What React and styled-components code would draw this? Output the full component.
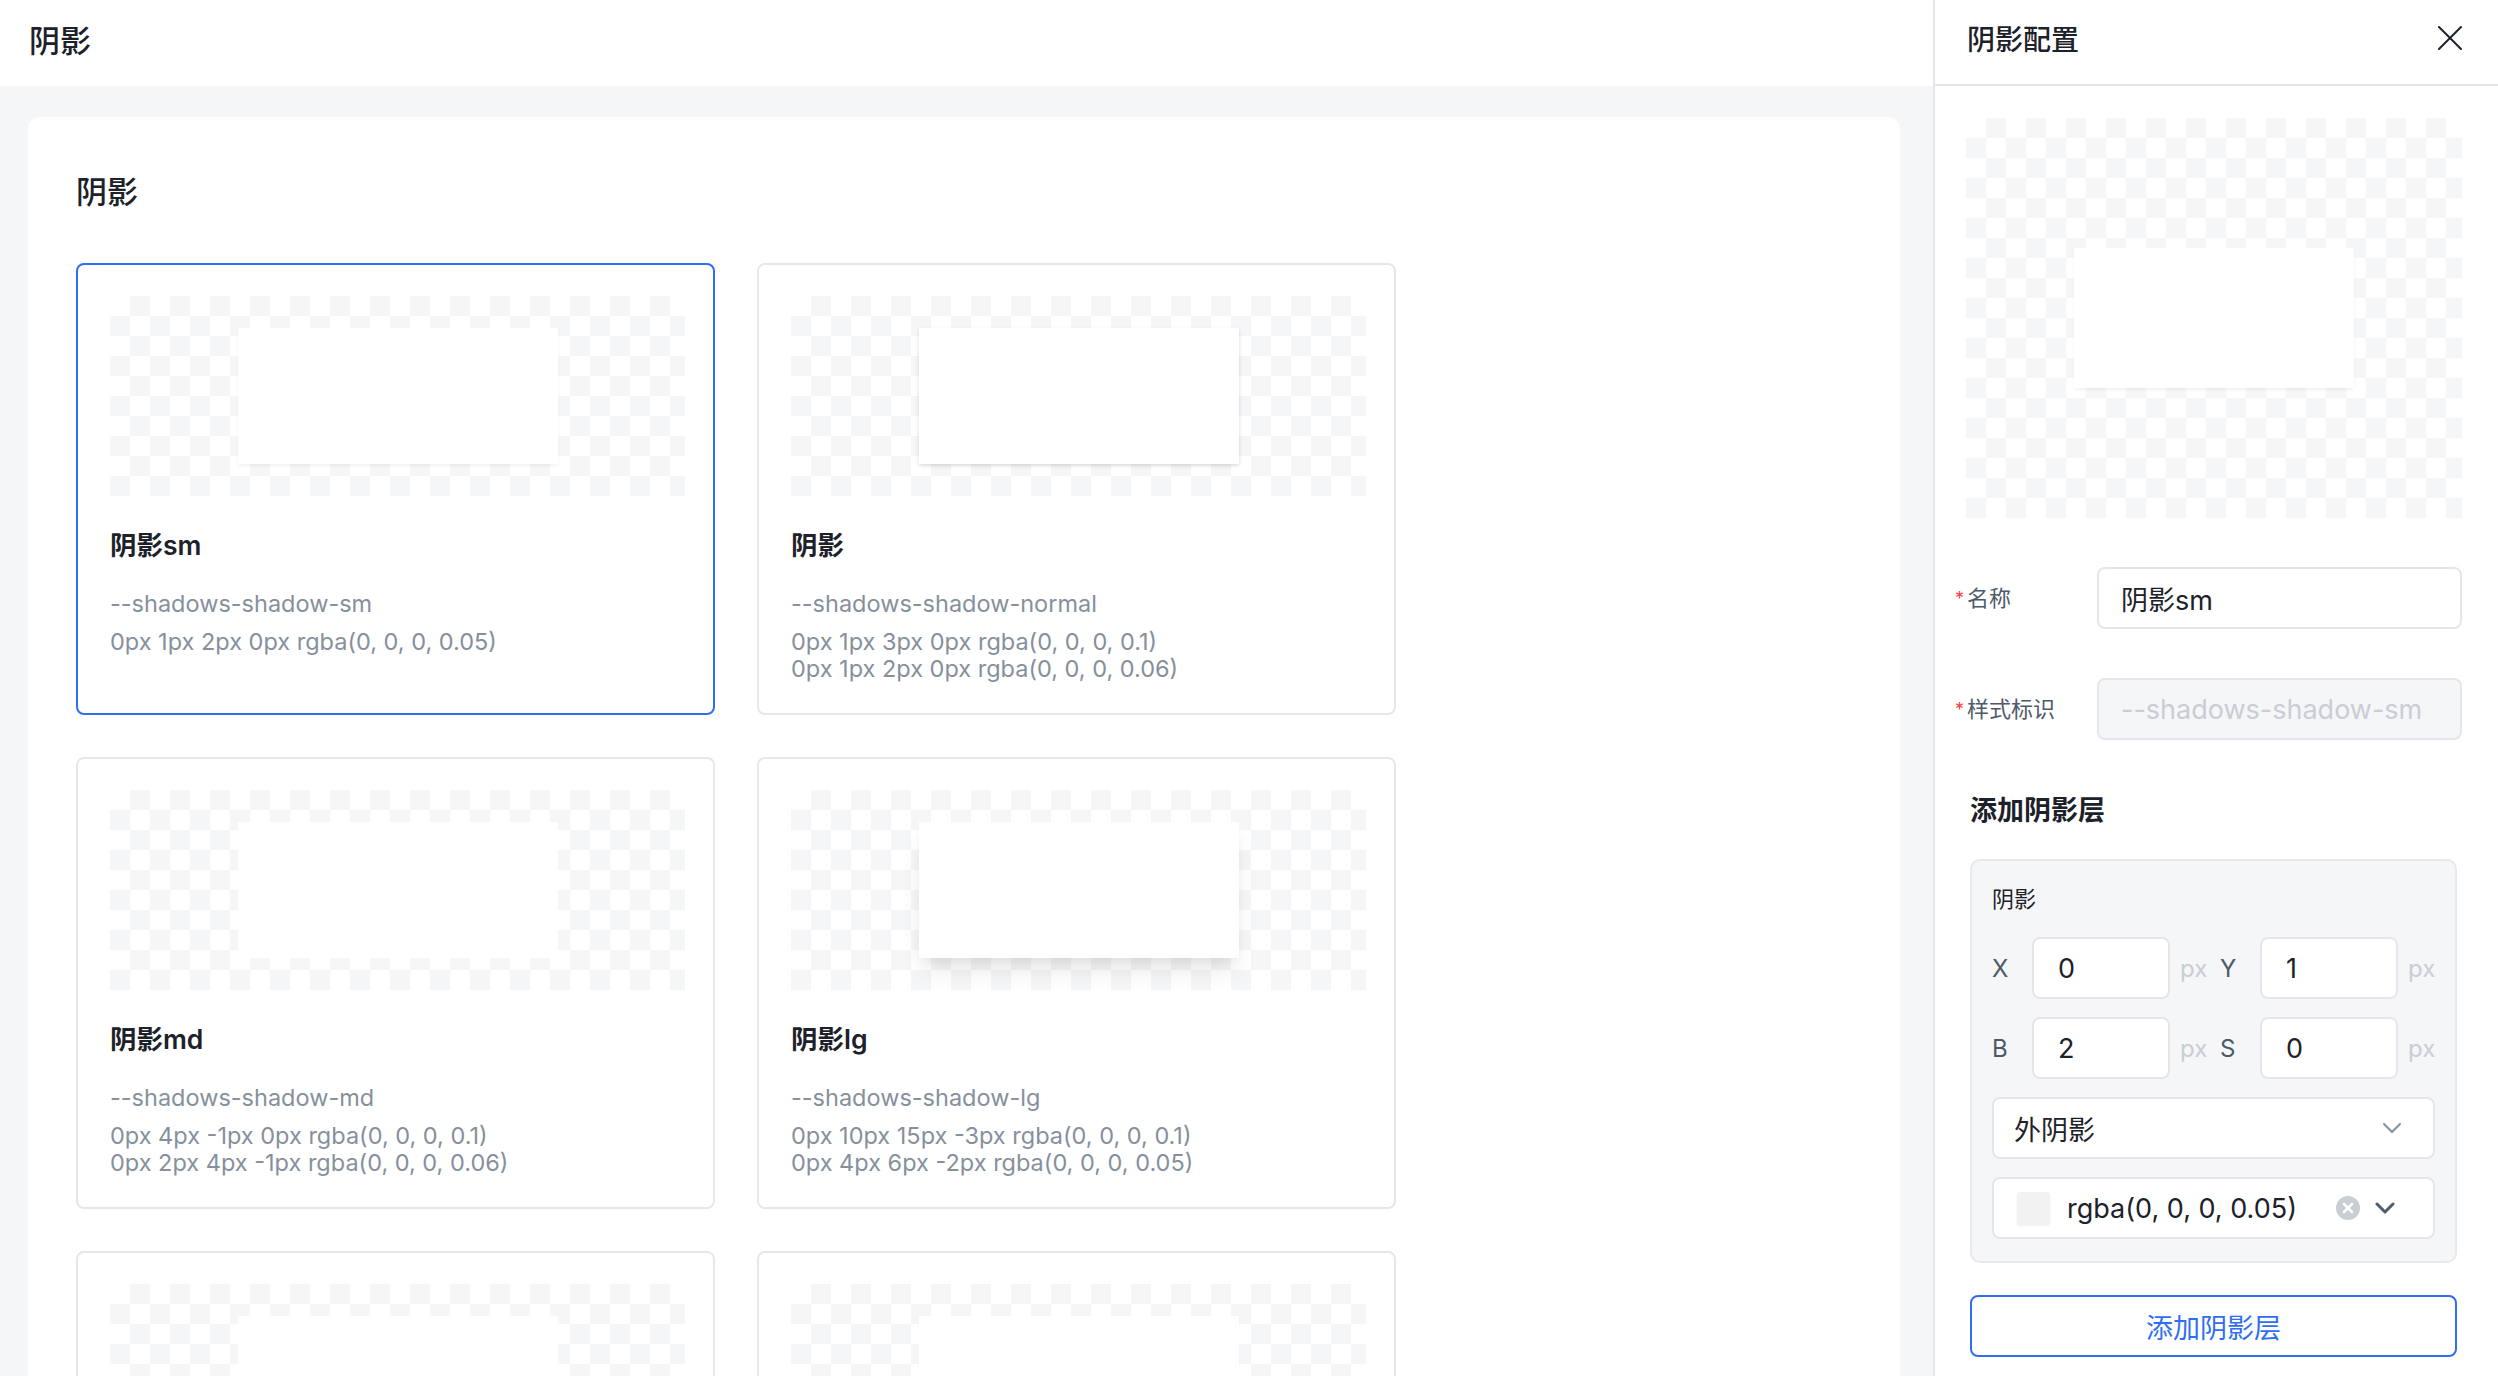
import React from 'react'
import styled, { createGlobalStyle } from 'styled-components'

const GlobalStyle = createGlobalStyle`
  html, body {
    margin: 0;
    height: 100%;
    overflow: hidden;
  }
  body {
    font-family: Inter, "Noto Sans CJK SC", sans-serif;
    color: #1d2129;
    background: #fff;
  }
  * {
    box-sizing: border-box;
  }
`

const shadows = [
  {
    name: '阴影sm',
    token: '--shadows-shadow-sm',
    values: ['0px 1px 2px 0px rgba(0, 0, 0, 0.05)'],
    preview: '0 1.6px 3.2px 0 rgba(0, 0, 0, 0.05)',
    active: true,
  },
  {
    name: '阴影',
    token: '--shadows-shadow-normal',
    values: ['0px 1px 3px 0px rgba(0, 0, 0, 0.1)', '0px 1px 2px 0px rgba(0, 0, 0, 0.06)'],
    preview: '0 1.6px 4.8px 0 rgba(0, 0, 0, 0.1), 0 1.6px 3.2px 0 rgba(0, 0, 0, 0.06)',
  },
  {
    name: '阴影md',
    token: '--shadows-shadow-md',
    values: ['0px 4px -1px 0px rgba(0, 0, 0, 0.1)', '0px 2px 4px -1px rgba(0, 0, 0, 0.06)'],
    preview: 'none',
  },
  {
    name: '阴影lg',
    token: '--shadows-shadow-lg',
    values: ['0px 10px 15px -3px rgba(0, 0, 0, 0.1)', '0px 4px 6px -2px rgba(0, 0, 0, 0.05)'],
    preview: '0 16px 24px -4.8px rgba(0, 0, 0, 0.1), 0 6.4px 9.6px -3.2px rgba(0, 0, 0, 0.05)',
  },
  {
    name: '阴影xl',
    token: '--shadows-shadow-xl',
    values: ['0px 20px -5px 0px rgba(0, 0, 0, 0.1)', '0px 10px 10px -5px rgba(0, 0, 0, 0.04)'],
    preview: 'none',
  },
  {
    name: '阴影2xl',
    token: '--shadows-shadow-2xl',
    values: ['0px 25px 50px -12px rgba(0, 0, 0, 0.25)'],
    preview: '0 1px 2px 0 rgba(0, 0, 0, 0.03)',
  },
]

function CloseIcon() {
  return (
    <svg width="24" height="24" viewBox="0 0 24 24" fill="none" stroke="#1d2129" strokeWidth="2" strokeLinecap="round">
      <line x1="1" y1="1" x2="23" y2="23" />
      <line x1="23" y1="1" x2="1" y2="23" />
    </svg>
  )
}

function Chevron({ bold }) {
  return (
    <svg width="20" height="12" viewBox="0 0 20 12" fill="none" stroke={bold ? '#4e5969' : '#86909c'} strokeWidth={bold ? 3 : 2} strokeLinecap="round" strokeLinejoin="round">
      <polyline points="2,2 10,10 18,2" />
    </svg>
  )
}

function ClearIcon() {
  return (
    <svg width="26" height="26" viewBox="0 0 26 26">
      <circle cx="13" cy="13" r="12" fill="#c9cdd4" />
      <g stroke="#fff" strokeWidth="2.6" strokeLinecap="round">
        <line x1="9" y1="9" x2="17" y2="17" />
        <line x1="17" y1="9" x2="9" y2="17" />
      </g>
    </svg>
  )
}

function ShadowCard({ item }) {
  return (
    <Card $active={item.active}>
      <Checker $height={200}>
        <PreviewBox $w={320} $h={136} $shadow={item.preview} />
      </Checker>
      <CardTitle>{item.name}</CardTitle>
      <Token>{item.token}</Token>
      <Values>
        {item.values.map((v) => (
          <div key={v}>{v}</div>
        ))}
      </Values>
    </Card>
  )
}

export default function App() {
  return (
    <>
      <GlobalStyle />
      <Page>
        <Main>
          <TopBar>
            <PageTitle>阴影</PageTitle>
          </TopBar>
          <Content>
            <Panel>
              <PanelTitle>阴影</PanelTitle>
              <CardGrid>
                {shadows.map((s) => (
                  <ShadowCard key={s.token} item={s} />
                ))}
              </CardGrid>
            </Panel>
          </Content>
        </Main>

        <Side>
          <SideHeader>
            <SideTitle>阴影配置</SideTitle>
            <CloseButton>
              <CloseIcon />
            </CloseButton>
          </SideHeader>
          <SideBody>
            <Checker $height={400}>
              <PreviewBox $w={280} $h={140} $shadow="0 1.6px 3.2px 0 rgba(0, 0, 0, 0.05)" />
            </Checker>

            <FieldRow>
              <FieldLabel><Required>*</Required>名称</FieldLabel>
              <TextInput value="阴影sm" readOnly />
            </FieldRow>
            <FieldRow>
              <FieldLabel><Required>*</Required>样式标识</FieldLabel>
              <TextInput value="--shadows-shadow-sm" readOnly $disabled />
            </FieldRow>

            <LayerSection>
              <LayerHeading>添加阴影层</LayerHeading>
              <LayerBox>
                <LayerName>阴影</LayerName>
                <ParamGrid>
                  <ParamLabel>X</ParamLabel>
                  <NumberInput value="0" readOnly />
                  <Unit>px</Unit>
                  <ParamLabel>Y</ParamLabel>
                  <NumberInput value="1" readOnly />
                  <Unit>px</Unit>
                  <ParamLabel>B</ParamLabel>
                  <NumberInput value="2" readOnly />
                  <Unit>px</Unit>
                  <ParamLabel>S</ParamLabel>
                  <NumberInput value="0" readOnly />
                  <Unit>px</Unit>
                </ParamGrid>
                <SelectBox>
                  <span>外阴影</span>
                  <Chevron />
                </SelectBox>
                <ColorField>
                  <Swatch />
                  <ColorText>rgba(0, 0, 0, 0.05)</ColorText>
                  <ClearIcon />
                  <Chevron bold />
                </ColorField>
              </LayerBox>
              <AddButton>添加阴影层</AddButton>
            </LayerSection>
          </SideBody>
        </Side>
      </Page>
    </>
  )
}

const Page = styled.div`
  display: flex;
  width: 100%;
  height: 100vh;
  overflow: hidden;
`

const Main = styled.div`
  flex: 1;
  min-width: 0;
  display: flex;
  flex-direction: column;
`

const TopBar = styled.div`
  height: 86px;
  flex-shrink: 0;
  display: flex;
  align-items: center;
  padding: 0 29px 5px;
  background: #fff;
`

const PageTitle = styled.h1`
  margin: 0;
  font-size: 31px;
  line-height: 42px;
  font-weight: 500;
  color: #1d2129;
`

const Content = styled.div`
  flex: 1;
  min-height: 0;
  overflow: hidden;
  background: #f5f6f8;
  padding: 31px 33px 0 28px;
`

const Panel = styled.div`
  background: #fff;
  border-radius: 12px;
  padding: 54px 48px 48px;
`

const PanelTitle = styled.h2`
  margin: 0 0 50px;
  font-size: 31px;
  line-height: 42px;
  font-weight: 500;
  color: #1d2129;
`

const CardGrid = styled.div`
  display: grid;
  grid-template-columns: repeat(2, 639px);
  gap: 42px;
`

const Card = styled.div`
  border: 2px solid ${(p) => (p.$active ? '#2f6ef2' : '#e6e7eb')};
  border-radius: 8px;
  padding: 31px 28px 31px 32px;
  background: #fff;
`

const Checker = styled.div`
  height: ${(p) => p.$height}px;
  display: flex;
  align-items: center;
  justify-content: center;
  background: repeating-conic-gradient(#f5f6f8 0 25%, #fff 0 50%) 0 0 / 40px 40px;
`

const PreviewBox = styled.div`
  width: ${(p) => p.$w}px;
  height: ${(p) => p.$h}px;
  background: #fff;
  box-shadow: ${(p) => p.$shadow};
`

const CardTitle = styled.div`
  margin-top: 31px;
  font-size: 26.5px;
  line-height: 36px;
  font-weight: 600;
  color: #1d2129;
`

const Token = styled.div`
  margin-top: 27px;
  font-size: 23.5px;
  line-height: 28px;
  color: #86909c;
`

const Values = styled.div`
  margin-top: 10px;
  font-size: 23.5px;
  line-height: 27px;
  color: #86909c;
`

const Side = styled.aside`
  width: 565px;
  flex-shrink: 0;
  border-left: 2px solid #e5e6eb;
  background: #fff;
  display: flex;
  flex-direction: column;
`

const SideHeader = styled.div`
  height: 86px;
  flex-shrink: 0;
  display: flex;
  align-items: center;
  justify-content: space-between;
  padding: 0 36px 4px 32px;
  border-bottom: 2px solid #e5e6eb;
`

const SideTitle = styled.h3`
  margin: 0;
  font-size: 28px;
  line-height: 40px;
  font-weight: 500;
  color: #1d2129;
`

const CloseButton = styled.button`
  display: flex;
  padding: 0;
  margin-bottom: 4px;
  border: none;
  background: none;
  cursor: pointer;
`

const SideBody = styled.div`
  padding: 32px 36px 0 31px;
`

const FieldRow = styled.div`
  display: grid;
  grid-template-columns: 131px 1fr;
  align-items: center;
  margin-top: 49px;
`

const FieldLabel = styled.label`
  margin-left: -11px;
  font-size: 22px;
  line-height: 30px;
  color: #4e5969;
`

const Required = styled.span`
  display: inline-block;
  width: 12px;
  font-size: 18px;
  color: #f53f3f;
  vertical-align: 1px;
`

const TextInput = styled.input`
  width: 100%;
  height: 62px;
  border: 2px solid #e5e6eb;
  border-radius: 8px;
  padding: 0 22px;
  font: inherit;
  font-size: 27px;
  outline: none;
  color: ${(p) => (p.$disabled ? '#c9cdd4' : '#1d2129')};
  background: ${(p) => (p.$disabled ? '#f5f6f8' : '#fff')};
`

const LayerSection = styled.div`
  margin: 0 5px 0 4px;
`

const LayerHeading = styled.h4`
  margin: 51px 0 28px;
  font-size: 27px;
  line-height: 40px;
  font-weight: 600;
  color: #1d2129;
`

const LayerBox = styled.div`
  background: #f5f6f8;
  border: 2px solid #e8e9ec;
  border-radius: 10px;
  padding: 22px 20px 22px 20px;
`

const LayerName = styled.div`
  font-size: 22px;
  line-height: 32px;
  margin-bottom: 22px;
  color: #1d2129;
`

const ParamGrid = styled.div`
  display: grid;
  grid-template-columns: 40px 138px 50px 40px 138px 1fr;
  row-gap: 18px;
  align-items: center;
`

const ParamLabel = styled.span`
  font-size: 24px;
  color: #4e5969;
`

const NumberInput = styled.input`
  width: 138px;
  height: 62px;
  border: 2px solid #e5e6eb;
  border-radius: 8px;
  padding: 0 24px;
  font: inherit;
  font-size: 27px;
  color: #1d2129;
  background: #fff;
  outline: none;
`

const Unit = styled.span`
  padding-left: 10px;
  font-size: 24px;
  color: #c9cdd4;
`

const SelectBox = styled.div`
  margin-top: 18px;
  height: 62px;
  display: flex;
  align-items: center;
  justify-content: space-between;
  padding: 0 31px 0 20px;
  background: #fff;
  border: 2px solid #e5e6eb;
  border-radius: 8px;
  font-size: 27px;
  color: #1d2129;
`

const ColorField = styled.div`
  margin-top: 18px;
  height: 62px;
  display: flex;
  align-items: center;
  gap: 14px;
  padding: 0 38px 0 23px;
  background: #fff;
  border: 2px solid #e5e6eb;
  border-radius: 8px;
`

const Swatch = styled.span`
  width: 33px;
  height: 33px;
  border-radius: 3px;
  background: #f2f2f3;
  box-shadow: 0 1px 3px rgba(0, 0, 0, 0.06);
  margin-right: 3px;
`

const ColorText = styled.span`
  flex: 1;
  font-size: 27px;
  color: #1d2129;
`

const AddButton = styled.button`
  margin-top: 32px;
  width: 100%;
  height: 62px;
  border: 2px solid #2f6ef2;
  border-radius: 8px;
  background: #fff;
  color: #2f6ef2;
  font: inherit;
  font-size: 27px;
  cursor: pointer;
`
